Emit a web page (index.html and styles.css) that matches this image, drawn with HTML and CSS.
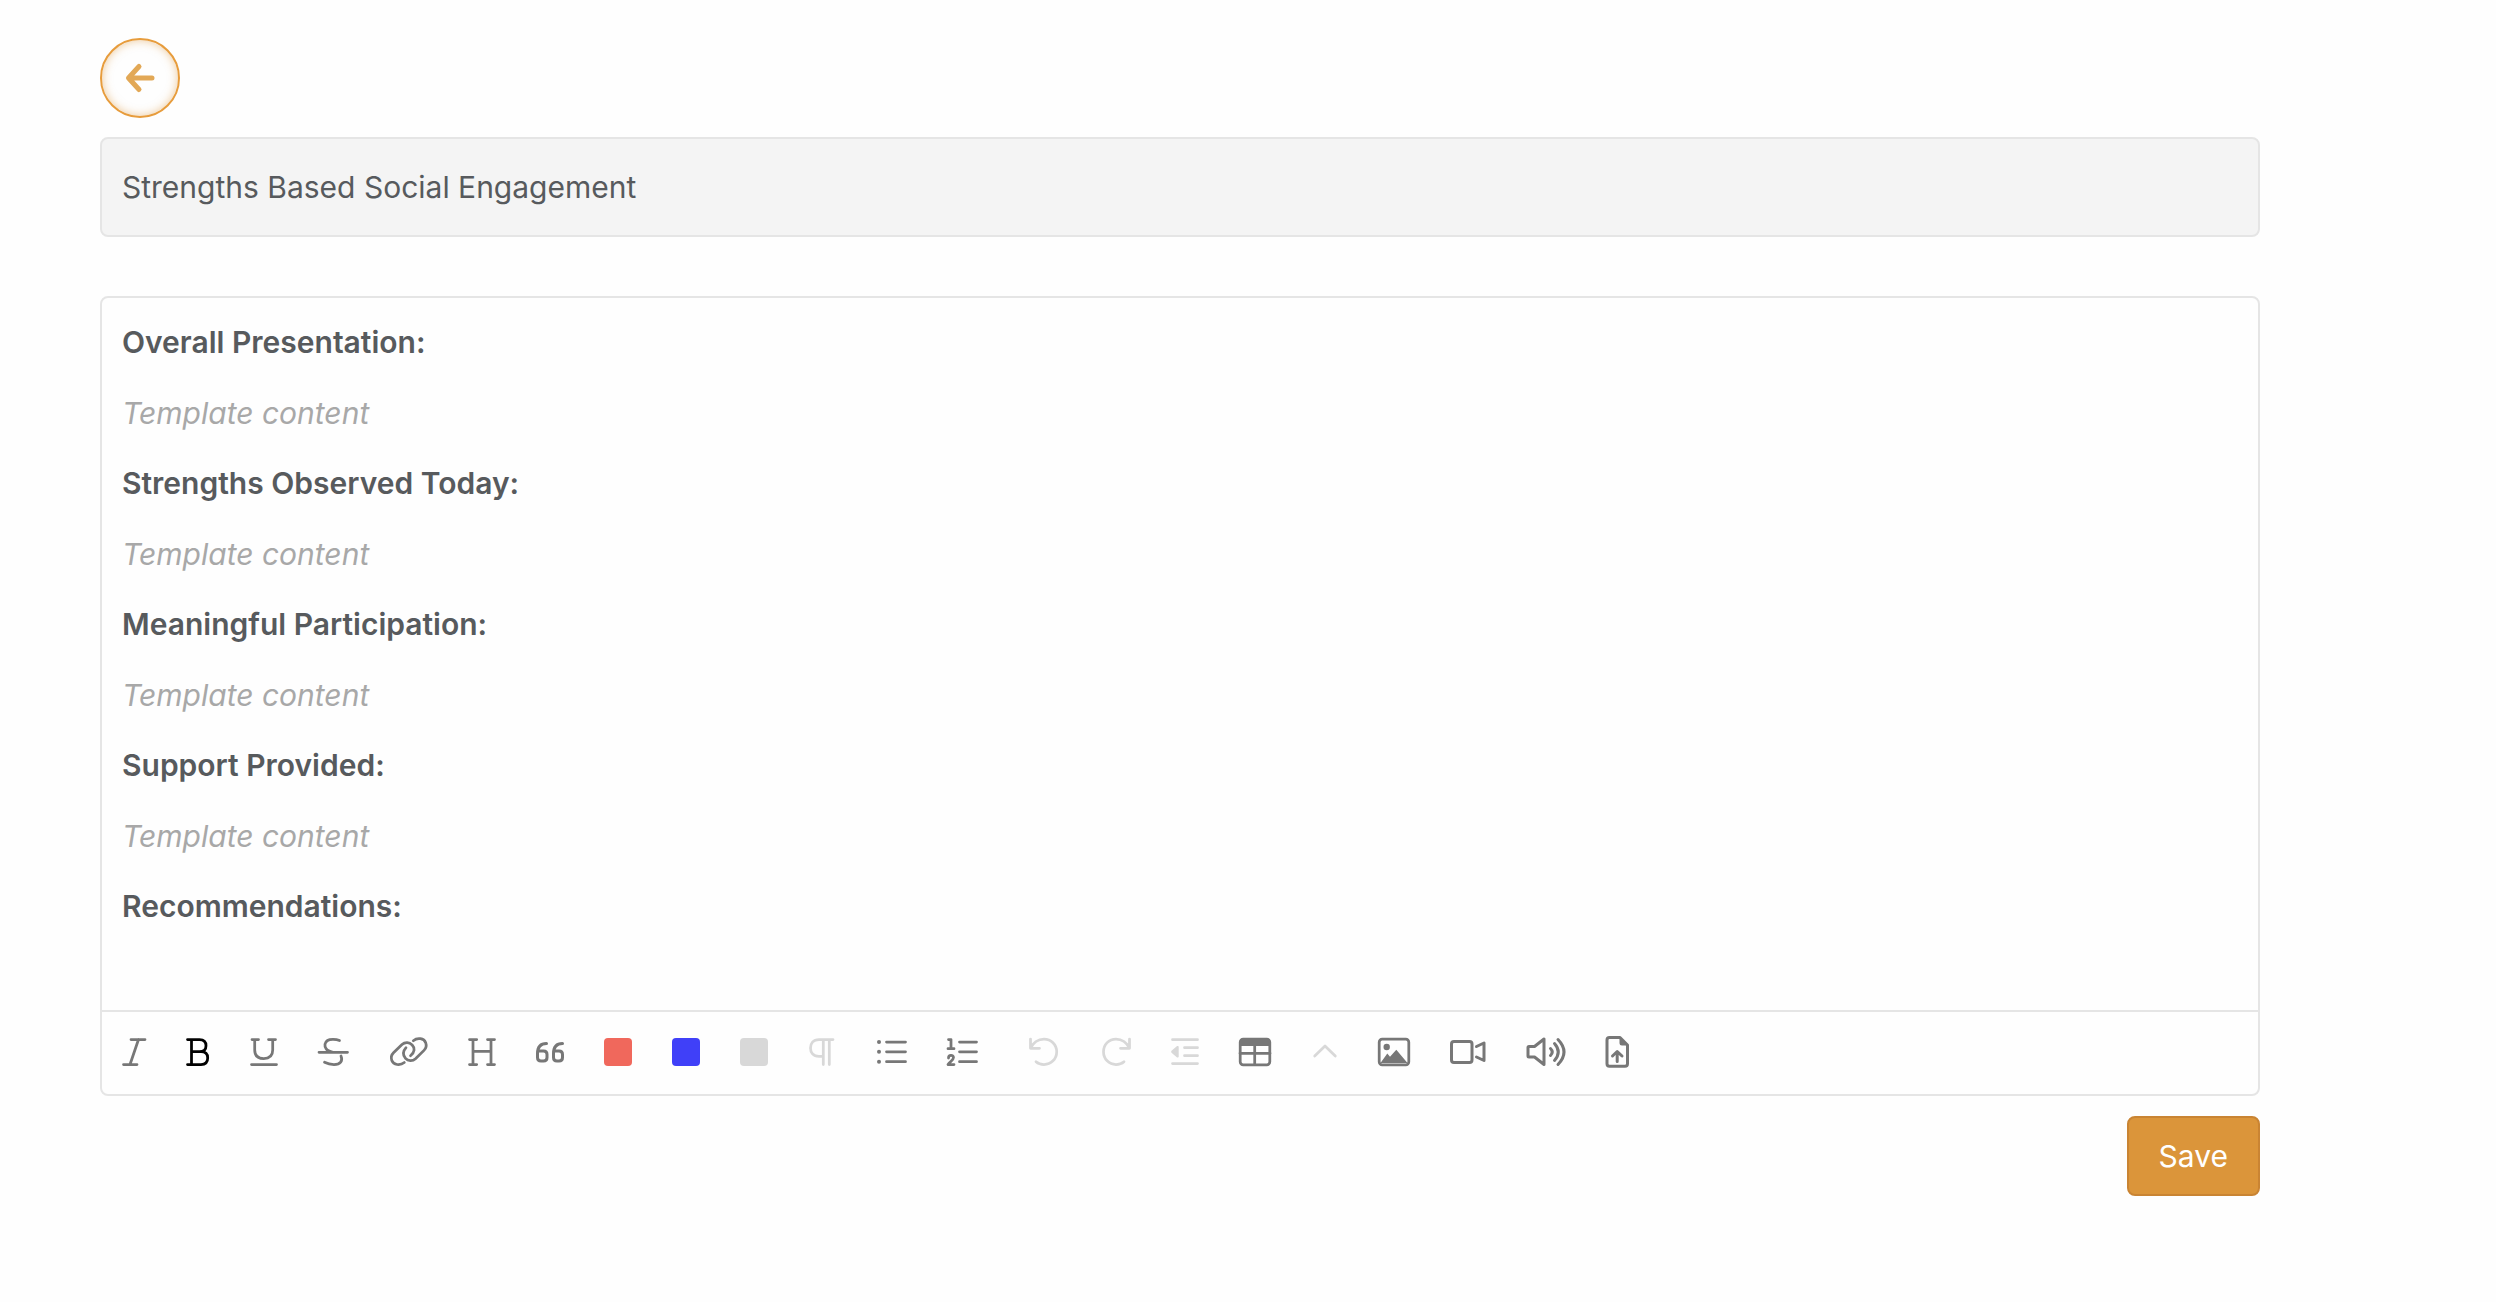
FILE: index.html
```
<!DOCTYPE html>
<html lang="en">
<head>
<meta charset="utf-8">
<meta name="viewport" content="width=device-width, initial-scale=1">
<title>Edit template</title>
<link rel="stylesheet" href="styles.css">
</head>
<body>
<main class="page">
  <button type="button" class="back" aria-label="Back">
    <svg width="30" height="30" viewBox="0 0 30 30"><path d="M14 3.500L3.500 15L14 26.500M4 15H27"/></svg>
  </button>
  <input class="title" type="text" aria-label="Template name" value="Strengths Based Social Engagement" readonly>
  <section class="editor">
    <div class="content" role="textbox" aria-multiline="true" aria-label="Template body" contenteditable="true" spellcheck="false">
      <h2>Overall Presentation:</h2>
      <p>Template content</p>
      <h2>Strengths Observed Today:</h2>
      <p>Template content</p>
      <h2>Meaningful Participation:</h2>
      <p>Template content</p>
      <h2>Support Provided:</h2>
      <p>Template content</p>
      <h2>Recommendations:</h2>
    </div>
    <div class="toolbar" role="toolbar" aria-label="Formatting">
      <button type="button" aria-label="Italic"><svg width="24" height="40"><path d="M9 7.500H23M1.500 32.500H15M16.500 7.500L8 32.500"/></svg></button>
      <button type="button" class="active" aria-label="Bold"><svg width="24" height="40"><path d="M1.500 7.500H13.500C18 7.500 20 10 20 13.700C20 17.500 18 19.700 13.500 19.700H5.500M13.500 19.700H15C19.500 19.700 21.700 22 21.700 26C21.700 30 19.500 32.500 15 32.500H1.500M5.500 7.500V32.500"/></svg></button>
      <button type="button" aria-label="Underline"><svg width="28" height="40"><path d="M2 7.500H8.500M18.500 7.500H25.500M4.700 7.500V18C4.700 23.500 8 26.500 13.700 26.500C19.400 26.500 22.700 23.500 22.700 18V7.500M1.500 32.500H26.500"/></svg></button>
      <button type="button" aria-label="Strikethrough"><svg width="32" height="40"><path d="M1 20.300H29.500M21.500 8.500C18 7 12 6.800 9.500 8.500C6.500 10.500 6.300 14 8 16.500C9 18.300 11.500 19.500 15 20.300M23 24C25 29 22.500 32.500 16 32.500C12 32.500 9.500 31.800 6.500 30.300"/></svg></button>
      <button type="button" aria-label="Link"><svg width="38" height="40"><path d="M14.300 30.500C10 34 3.500 33 1.800 28.500C.700 25.500 1.300 23 3.500 20.800L12 12.500C15 9.700 19.500 10 22 12.800C25 16 25 20 20.500 23.700M23.300 8.700C27.500 5.200 34 6.200 35.700 10.700C36.800 13.700 36.200 16.200 34 18.400L25.500 26.700C22.500 29.500 18 29.200 15.500 26.400C12.500 23 12.700 19.500 16 15.700"/></svg></button>
      <button type="button" aria-label="Heading"><svg width="28" height="40"><path d="M1.500 7.500H8.700M19.500 7.500H26.500M1.500 32.500H8.700M19.500 32.500H26.500M5 7.500V32.500M23 7.500V32.500M5 19.300H23"/></svg></button>
      <button type="button" aria-label="Quote"><svg width="28" height="40"><g class="heavy"><path d="M10.500 11.500C4.500 11.500 1.500 15 1.500 21.500V25.500C1.500 28 3 29 5 29H7.500C9.500 29 11 28 11 25.500V22.500C11 20 9.500 19 7.500 19H2"/><path d="M26.500 11.500C20.500 11.500 17.500 15 17.500 21.500V25.500C17.500 28 19 29 21 29H23C25 29 26.500 28 26.500 25.500V22.500C26.500 20 25 19 23 19H18"/></g></svg></button>
      <button type="button" class="swatch red" aria-label="Red"></button>
      <button type="button" class="swatch blue" aria-label="Blue"></button>
      <button type="button" class="swatch gray" aria-label="Clear color" disabled></button>
      <button type="button" aria-label="Paragraph" disabled><svg width="28" height="40"><path d="M25 7.500H11C5 7.500 2.500 11.500 2.500 16C2.500 20.500 5 24.300 11 24.300H15M15.300 7.500V32.500M21.300 7.500V32.500"/></svg></button>
      <button type="button" aria-label="Bulleted list"><svg width="30" height="40"><path d="M10.500 10H29.500M10.500 19.800H29.500M10.500 29.700H29.500"/><g class="solid"><circle cx="3" cy="10" r="2"/><circle cx="3" cy="19.800" r="2"/><circle cx="3" cy="29.700" r="2"/></g></svg></button>
      <button type="button" aria-label="Numbered list"><svg width="32" height="40"><path d="M13.500 10H30.500M13.500 19.800H30.500M13.500 29.700H30.500M2.500 7.500H5V16.500M2 16.700H8M2.500 26C2.500 22.500 7.500 22.500 7.500 25.500C7.500 28 4 29.500 2 32.500H8"/></svg></button>
      <button type="button" aria-label="Undo" disabled><svg width="44" height="40"><path d="M12.500 7V16.300H21.500M12.700 16C15 11 20 7 26 7C33 7 38.700 12.500 38.700 19.700C38.700 27 33 32.500 26 32.500C23 32.500 20 31.500 18 29.700"/></svg></button>
      <button type="button" aria-label="Redo" disabled><svg width="29" height="40"><path d="M27.500 7V16.300H18.500M27.300 16C25 11 20 7 14 7C7 7 1.500 12.500 1.500 19.700C1.500 27 7 32.500 14 32.500C17 32.500 20 31.500 22 29.700"/></svg></button>
      <button type="button" aria-label="Outdent" disabled><svg width="28" height="40"><path d="M1.500 7.700H26.500M13.500 15.700H26.500M13.500 23.700H26.500M1.500 31.500H26.500"/><path class="solid" d="M.500 18.800L5.500 14.500C6.500 13.700 7.700 14 7.700 15V24.500C7.700 25.500 6.500 26 5.500 25L.500 20.800Q-.300 19.800 .500 18.800Z"/></svg></button>
      <button type="button" aria-label="Insert table"><svg width="32" height="40"><rect x="1.200" y="7.200" width="29.600" height="25.600" rx="3"/><path class="solid" d="M1 14V9Q1 7 3 7H29Q31 7 31 9V14Z"/><path d="M15.700 14V32M1 21.300H31"/></svg></button>
      <button type="button" aria-label="Collapse" disabled><svg width="27" height="40"><path d="M3.700 24L14 14L24.300 24"/></svg></button>
      <button type="button" aria-label="Insert image"><svg width="32" height="40"><rect x="1.200" y="7.200" width="29.600" height="25.600" rx="3"/><g class="solid"><circle cx="8.700" cy="15" r="3.200"/><path d="M2.500 31L9.300 21.500L12 24.700L18.300 17.800L29.500 31Z"/></g></svg></button>
      <button type="button" aria-label="Insert video"><svg width="36" height="40"><g class="heavy"><rect x="1.500" y="9.500" width="20.500" height="21" rx="2.500"/><path d="M26.500 14.500L34 11V28.500L26.500 25"/></g></svg></button>
      <button type="button" aria-label="Insert audio"><svg width="40" height="40"><g class="heavy"><path d="M2 15.500Q2 14.500 3 14.500H8.500L18 7V32.500L8.500 25H3Q2 25 2 24Z"/><path d="M24.500 16.500Q28 20 24.500 23.500M28.500 11.500Q36 20 28.500 28.500M32 7.500Q44 20 32 32.500"/></g></svg></button>
      <button type="button" aria-label="Upload file"><svg width="24" height="40"><g class="heavy"><path d="M14 5.500H3.500Q1 5.500 1 8V31.700Q1 34.200 3.500 34.200H19Q21.500 34.200 21.500 31.700V13L14 5.500M11.200 20V29.500M6.500 24L11.200 19.500L16 24"/></g><path class="solid" d="M13.500 5L22 13.500H16Q13.500 13.500 13.500 11Z"/></svg></button>
    </div>
  </section>
  <div class="actions"><button type="button" class="save">Save</button></div>
</main>
</body>
</html>
```
FILE: styles.css
```
* {
  box-sizing: border-box;
}

body {
  margin: 0;
  background: #fefefe;
  color: #575a5d;
  font: 30px/40px Inter, "Open Sans", sans-serif;
}

button {
  margin: 0;
  padding: 0;
  border: 0;
  background: none;
  color: inherit;
  font: inherit;
  cursor: pointer;
}

svg {
  display: block;
  overflow: visible;
  fill: none;
  stroke: currentColor;
  stroke-linecap: round;
  stroke-linejoin: round;
}

.page {
  display: flex;
  flex-direction: column;
  padding: 38px 236px 40px 100px;
}

.back {
  display: grid;
  place-items: center;
  width: 80px;
  height: 80px;
  border: 2px solid #e79c3c;
  border-radius: 50%;
  color: #e2a856;
  box-shadow: inset 0 0 10px rgba(221, 149, 58, 0.5);
}

.back svg {
  stroke-width: 5;
}

.title {
  width: 100%;
  height: 100px;
  margin: 19px 0 59px;
  padding: 0 20px;
  border: 2px solid #e5e5e5;
  border-radius: 8px;
  background: #f4f4f4;
  color: inherit;
  font: inherit;
}

.editor {
  border: 2px solid #e5e5e5;
  border-radius: 8px;
}

.content {
  padding: 24px 20px 83px;
  outline: 0;
}

.content h2 {
  margin: 0 0 30px;
  font: inherit;
  font-weight: 600;
  line-height: 41px;
}

.content p {
  margin: 0 0 30px;
  color: #a8a8a8;
  font-style: italic;
}

.content :last-child {
  margin: 0;
}

.toolbar {
  display: flex;
  align-items: center;
  gap: 40px;
  padding: 20px 22px 22px 20px;
  border-top: 2px solid #e5e5e5;
  color: #777;
}

.toolbar svg {
  stroke-width: 2.75;
}

.toolbar .heavy {
  stroke-width: 3;
}

.toolbar .solid {
  fill: currentColor;
  stroke: none;
}

.toolbar button:disabled {
  color: #d8d8d8;
  cursor: default;
}

.toolbar .active {
  color: #000;
}

.toolbar .swatch {
  width: 28px;
  height: 28px;
  border-radius: 4px;
}

.toolbar .red {
  background: #f0685c;
}

.toolbar .blue {
  background: #4040f8;
}

.toolbar .gray {
  background: #d8d8d8;
}

.actions {
  display: flex;
  justify-content: flex-end;
  margin-top: 20px;
}

.save {
  height: 80px;
  padding: 0 30px;
  border: 2px solid #c98433;
  border-radius: 8px;
  background: #db953a;
  color: #fff;
}
```
